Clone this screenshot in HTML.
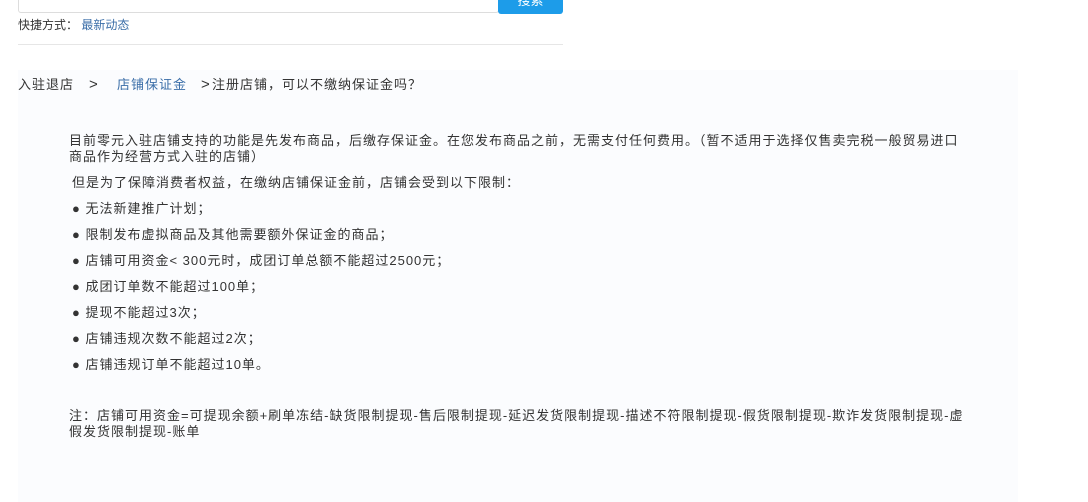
<!DOCTYPE html><html><head><meta charset="utf-8"><style>
body{margin:0;width:1088px;height:502px;background:#fff;font-family:"Liberation Sans","Noto Sans CJK SC",sans-serif;color:#333;position:relative;overflow:hidden}
.a{position:absolute;white-space:nowrap}
.t{font-size:13px;line-height:16px;letter-spacing:1px}
</style></head><body>
<div class="a" style="left:18px;top:-2px;width:479px;height:14px;border:1px solid #ddd;border-top:none;border-radius:0 0 3px 3px"></div>
<div class="a" style="left:498px;top:-6px;width:65px;height:20px;background:#1d9ce9;border-radius:0 0 3px 3px;color:#fff;font-size:13px;text-align:center;line-height:14px">搜索</div>
<div class="a" style="left:18px;top:17px;font-size:12px;line-height:16px;color:#333">快捷方式： <span style="color:#3b6ea8">最新动态</span></div>
<div class="a" style="left:18px;top:44px;width:545px;height:1px;background:#e6e6e6"></div>
<div class="a" style="left:18px;top:70px;width:1000px;height:432px;background:#fbfcfe"></div>
<div class="a t" style="left:18px;top:77px">入驻退店</div>
<div class="a t" style="left:89px;top:77px;font-size:15px">&gt;</div>
<div class="a t" style="left:117px;top:77px;color:#3b6ea8">店铺保证金</div>
<div class="a t" style="left:201px;top:77px;font-size:15px;letter-spacing:0">&gt;</div>
<div class="a t" style="left:212px;top:77px">注册店铺，可以不缴纳保证金吗？</div>
<div class="a t" style="left:69px;top:133px">目前零元入驻店铺支持的功能是先发布商品，后缴存保证金。在您发布商品之前，无需支付任何费用。（暂不适用于选择仅售卖完税一般贸易进口</div>
<div class="a t" style="left:69px;top:149px">商品作为经营方式入驻的店铺）</div>
<div class="a t" style="left:72px;top:175px">但是为了保障消费者权益，在缴纳店铺保证金前，店铺会受到以下限制：</div>
<div class="a t" style="left:72px;top:201px">● 无法新建推广计划；</div>
<div class="a t" style="left:72px;top:227px">● 限制发布虚拟商品及其他需要额外保证金的商品；</div>
<div class="a t" style="left:72px;top:253px">● 店铺可用资金&lt; 300元时，成团订单总额不能超过2500元；</div>
<div class="a t" style="left:72px;top:279px">● 成团订单数不能超过100单；</div>
<div class="a t" style="left:72px;top:305px">● 提现不能超过3次；</div>
<div class="a t" style="left:72px;top:331px">● 店铺违规次数不能超过2次；</div>
<div class="a t" style="left:72px;top:357px">● 店铺违规订单不能超过10单。</div>
<div class="a t" style="left:69px;top:408px">注：店铺可用资金=可提现余额+刷单冻结-缺货限制提现-售后限制提现-延迟发货限制提现-描述不符限制提现-假货限制提现-欺诈发货限制提现-虚</div>
<div class="a t" style="left:69px;top:424px">假发货限制提现-账单</div>
</body></html>
